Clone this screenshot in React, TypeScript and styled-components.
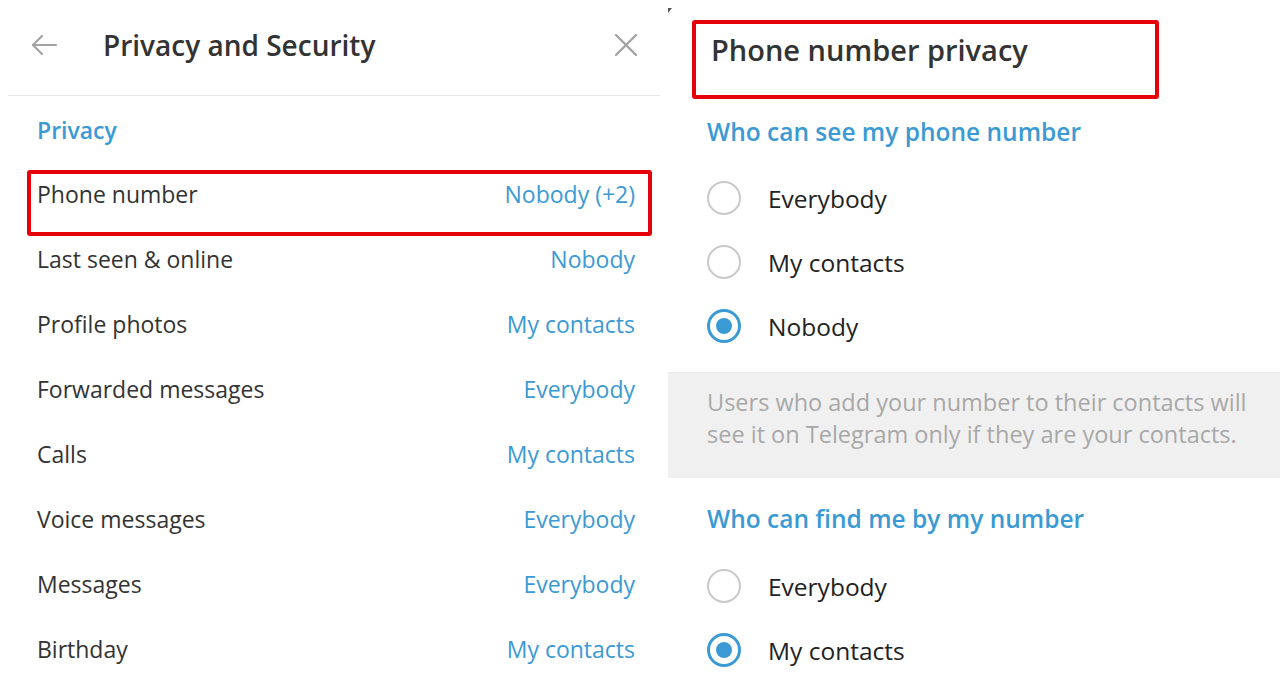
import React from "react";
import styled, { createGlobalStyle } from "styled-components";

const Global = createGlobalStyle`
  html, body { margin: 0; padding: 0; background: #fff; }
  body { font-family: "Open Sans", "Noto Sans", sans-serif; -webkit-font-smoothing: antialiased; }
  #root { width: 1280px; height: 673px; overflow: hidden; }
`;

const BLUE = "#3b9ad3";
const RED = "#e5000a";

const Page = styled.div`
  display: flex;
  width: 1280px;
  height: 673px;
  overflow: hidden;
`;

const LeftPanel = styled.div`
  width: 668px;
  flex-shrink: 0;
  display: flex;
  flex-direction: column;
  & > * { flex-shrink: 0; }
`;

const Header = styled.div`
  height: 96px;
  box-sizing: border-box;
  margin: 0 8px;
  padding: 0 22px 6px 22px;
  border-bottom: 1px solid #e7e7e7;
  display: flex;
  align-items: center;
`;

const IconButton = styled.div`
  display: flex;
  align-items: center;
  justify-content: center;
  color: #a3a3a3;
`;

const Title = styled.div`
  flex: 1;
  margin-left: 45px;
  font-size: 28px;
  font-weight: 600;
  color: #333;
  line-height: 38px;
`;

const SectionTitle = styled.div<{ $h: number; $pt?: number; $pb?: number }>`
  height: ${(p) => p.$h}px;
  box-sizing: border-box;
  padding-top: ${(p) => p.$pt ?? 0}px;
  padding-bottom: ${(p) => p.$pb ?? 0}px;
  display: flex;
  align-items: center;
  font-weight: 600;
  color: ${BLUE};
`;

const LeftSection = styled(SectionTitle)`
  padding-left: 37px;
  font-size: 23px;
`;

const Row = styled.div`
  position: relative;
  height: 65px;
  display: flex;
  align-items: center;
  justify-content: space-between;
  padding: 0 33px 0 37px;
  font-size: 23px;
  color: #333;
`;

const Value = styled.span`
  color: ${BLUE};
`;

const Highlight = styled.div<{ $l: number; $t: number; $w: number; $h: number }>`
  position: absolute;
  left: ${(p) => p.$l}px;
  top: ${(p) => p.$t}px;
  width: ${(p) => p.$w}px;
  height: ${(p) => p.$h}px;
  box-sizing: border-box;
  border: 4px solid ${RED};
  border-radius: 3px;
  pointer-events: none;
`;

const RightPanel = styled.div`
  position: relative;
  flex: 1;
  display: flex;
  flex-direction: column;
  & > * { flex-shrink: 0; }
`;

const Corner = styled.div`
  position: absolute;
  left: 0;
  top: 8px;
  width: 0;
  height: 0;
  border-top: 5px solid #555;
  border-right: 4px solid transparent;
`;

const PageTitle = styled.div`
  position: relative;
  height: 102px;
  box-sizing: border-box;
  padding: 0 0 4px 43px;
  display: flex;
  align-items: center;
  font-size: 29px;
  font-weight: 600;
  color: #333;
`;

const RightSection = styled(SectionTitle)`
  padding-left: 39px;
  font-size: 24.5px;
`;

const RadioRow = styled.div`
  height: 64px;
  display: flex;
  align-items: center;
  padding-left: 39px;
  font-size: 24.5px;
  color: #222;
`;

const Circle = styled.div<{ $on: boolean }>`
  width: 34px;
  height: 34px;
  box-sizing: border-box;
  border-radius: 50%;
  border: ${(p) => (p.$on ? `3px solid ${BLUE}` : "2.5px solid #c9c9c9")};
  display: flex;
  align-items: center;
  justify-content: center;
  margin-right: 27px;
  &::after {
    content: "";
    display: ${(p) => (p.$on ? "block" : "none")};
    width: 16px;
    height: 16px;
    border-radius: 50%;
    background: ${BLUE};
  }
`;

const Note = styled.div`
  margin-top: 14px;
  padding: 13px 20px 28px 39px;
  background: #f0f0f0;
  border-top: 1px solid #e8e8e8;
  font-size: 23.5px;
  line-height: 32px;
  color: #a8a8a8;
`;

const Back = () => (
  <svg width="28" height="24" viewBox="0 0 28 24" fill="none" stroke="currentColor" strokeWidth="2.2" strokeLinecap="round" strokeLinejoin="round">
    <path d="M26 12H3" />
    <path d="M12 3l-9 9 9 9" />
  </svg>
);

const Close = () => (
  <svg width="24" height="24" viewBox="0 0 24 24" fill="none" stroke="currentColor" strokeWidth="2.4" strokeLinecap="round">
    <path d="M2 2l20 20M22 2L2 22" />
  </svg>
);

const rows: [string, string][] = [
  ["Phone number", "Nobody (+2)"],
  ["Last seen & online", "Nobody"],
  ["Profile photos", "My contacts"],
  ["Forwarded messages", "Everybody"],
  ["Calls", "My contacts"],
  ["Voice messages", "Everybody"],
  ["Messages", "Everybody"],
  ["Birthday", "My contacts"],
];

const Radio = ({ label, on }: { label: string; on?: boolean }) => (
  <RadioRow>
    <Circle $on={!!on} />
    {label}
  </RadioRow>
);

export default function App() {
  return (
    <>
      <Global />
      <Page>
        <LeftPanel>
          <Header>
            <IconButton><Back /></IconButton>
            <Title>Privacy and Security</Title>
            <IconButton><Close /></IconButton>
          </Header>
          <LeftSection $h={65} $pt={3}>Privacy</LeftSection>
          {rows.map(([l, v], i) => (
            <Row key={l}>
              <span>{l}</span>
              <Value>{v}</Value>
              {i === 0 && <Highlight $l={27} $t={9} $w={625} $h={66} />}
            </Row>
          ))}
        </LeftPanel>
        <RightPanel>
          <Corner />
          <PageTitle>
            Phone number privacy
            <Highlight $l={24} $t={20} $w={467} $h={79} />
          </PageTitle>
          <RightSection $h={64} $pb={6}>Who can see my phone number</RightSection>
          <Radio label="Everybody" />
          <Radio label="My contacts" />
          <Radio label="Nobody" on />
          <Note>
            Users who add your number to their contacts will
            <br />
            see it on Telegram only if they are your contacts.
          </Note>
          <RightSection $h={76} $pt={4}>Who can find me by my number</RightSection>
          <Radio label="Everybody" />
          <Radio label="My contacts" on />
        </RightPanel>
      </Page>
    </>
  );
}
